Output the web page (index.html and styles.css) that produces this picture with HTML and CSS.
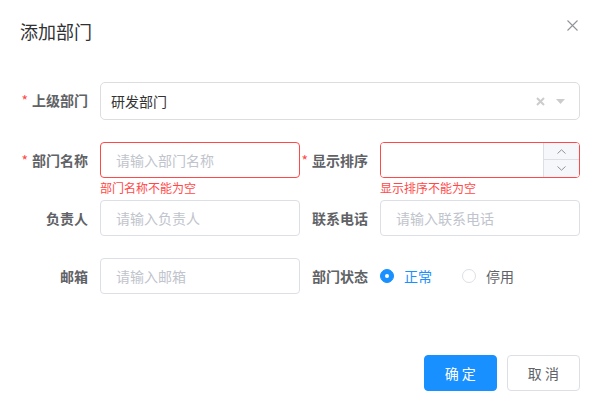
FILE: index.html
```html
<!DOCTYPE html>
<html lang="zh-CN">
<head>
<meta charset="utf-8">
<title>添加部门</title>
<link rel="stylesheet" href="styles.css">
</head>
<body>
<div class="dialog">
  <div class="dialog-header">
    <span class="dialog-title">添加部门</span>
    <button class="dialog-close" type="button" aria-label="Close">
      <svg width="11" height="11" viewBox="0 0 11 11"><path d="M0.5 0.5L10.5 10.5M10.5 0.5L0.5 10.5" stroke="#909399" stroke-width="1.1" fill="none"/></svg>
    </button>
  </div>

  <div class="dialog-body">
    <form class="form">
      <div class="form-row">
        <div class="form-item is-required col-24">
          <label class="form-label">上级部门</label>
          <div class="form-content">
            <div class="treeselect">
              <span class="treeselect-value">研发部门</span>
              <span class="treeselect-clear">
                <svg width="9" height="9" viewBox="0 0 9 9"><path d="M1 1L8 8M8 1L1 8" stroke="#cccccc" stroke-width="2" fill="none"/></svg>
              </span>
              <span class="treeselect-arrow">
                <svg width="9" height="5" viewBox="0 0 9 5"><path d="M0 0H9L4.5 5Z" fill="#cccccc"/></svg>
              </span>
            </div>
          </div>
        </div>
      </div>

      <div class="form-row">
        <div class="form-item is-required is-error col-12">
          <label class="form-label">部门名称</label>
          <div class="form-content">
            <input class="input" type="text" placeholder="请输入部门名称">
            <div class="form-error">部门名称不能为空</div>
          </div>
        </div>
        <div class="form-item is-required is-error col-12">
          <label class="form-label">显示排序</label>
          <div class="form-content">
            <div class="input-number">
              <input class="input input-number-field" type="text">
              <span class="input-number-btn increase">
                <svg width="9" height="5" viewBox="0 0 9 5"><path d="M0.5 4.5L4.5 0.8L8.5 4.5" stroke="#909399" stroke-width="1" fill="none"/></svg>
              </span>
              <span class="input-number-btn decrease">
                <svg width="9" height="5" viewBox="0 0 9 5"><path d="M0.5 0.5L4.5 4.2L8.5 0.5" stroke="#909399" stroke-width="1" fill="none"/></svg>
              </span>
            </div>
            <div class="form-error">显示排序不能为空</div>
          </div>
        </div>
      </div>

      <div class="form-row">
        <div class="form-item col-12">
          <label class="form-label">负责人</label>
          <div class="form-content">
            <input class="input" type="text" placeholder="请输入负责人">
          </div>
        </div>
        <div class="form-item col-12">
          <label class="form-label">联系电话</label>
          <div class="form-content">
            <input class="input" type="text" placeholder="请输入联系电话">
          </div>
        </div>
      </div>

      <div class="form-row">
        <div class="form-item col-12">
          <label class="form-label">邮箱</label>
          <div class="form-content">
            <input class="input" type="text" placeholder="请输入邮箱">
          </div>
        </div>
        <div class="form-item col-12">
          <label class="form-label">部门状态</label>
          <div class="form-content">
            <div class="radio-group">
              <label class="radio is-checked"><span class="radio-inner"></span><span class="radio-label">正常</span></label>
              <label class="radio"><span class="radio-inner"></span><span class="radio-label">停用</span></label>
            </div>
          </div>
        </div>
      </div>
    </form>
  </div>

  <div class="dialog-footer">
    <button class="btn btn-primary" type="button">确 定</button>
    <button class="btn" type="button">取 消</button>
  </div>
</div>
</body>
</html>
```

FILE: styles.css
```css
* {
  box-sizing: border-box;
}

html, body {
  margin: 0;
  background: #ffffff;
}

body {
  font-family: "Noto Sans CJK SC", "Noto Sans", "Liberation Sans", sans-serif;
  font-size: 14px;
  color: #606266;
}

.dialog {
  position: relative;
  width: 100%;
  background: #ffffff;
}

/* header */
.dialog-header {
  padding: 20px 17px 10px 20px;
}

.dialog-title {
  display: block;
  font-size: 18px;
  line-height: 22px;
  color: #303133;
}

.dialog-close {
  position: absolute;
  top: 20px;
  right: 19px;
  width: 11px;
  height: 11px;
  padding: 0;
  border: 0;
  background: none;
  line-height: 0;
  cursor: pointer;
}

/* body */
.dialog-body {
  padding: 30px 17px 30px 20px;
}

.form-row {
  display: flex;
}

.col-24 {
  flex: 0 0 100%;
}

.col-12 {
  flex: 0 0 50%;
  min-width: 0;
}

.form-item {
  display: flex;
  margin-bottom: 22px;
}

.form-label {
  flex: 0 0 80px;
  width: 80px;
  padding-right: 12px;
  text-align: right;
  font-weight: 700;
  font-size: 14px;
  line-height: 36px;
  color: #606266;
}

.is-required .form-label::before {
  content: "*";
  color: #ff4949;
  margin-right: 4px;
  font-weight: 400;
}

.form-content {
  position: relative;
  flex: 1;
  min-width: 0;
  line-height: 36px;
}

.form-error {
  position: absolute;
  top: 100%;
  left: 0;
  padding-top: 4px;
  font-size: 12px;
  line-height: 1;
  color: #ff4949;
}

/* text input */
.input {
  display: block;
  width: 100%;
  height: 36px;
  padding: 0 15px;
  border: 1px solid #dcdfe6;
  border-radius: 4px;
  background: #ffffff;
  font-family: inherit;
  font-size: 14px;
  color: #606266;
  outline: none;
}

.input::placeholder {
  color: #c0c4cc;
}

.is-error .input,
.is-error .input-number {
  border-color: #ff4949;
}

/* tree select */
.treeselect {
  display: flex;
  align-items: center;
  height: 38px;
  padding-left: 10px;
  border: 1px solid #dddddd;
  border-radius: 5px;
  background: #ffffff;
}

.treeselect-value {
  flex: 1;
  line-height: 36px;
  color: #333333;
}

.treeselect-clear {
  display: flex;
  width: 20px;
  justify-content: center;
  line-height: 0;
}

.treeselect-arrow {
  display: flex;
  width: 20px;
  margin-right: 9px;
  justify-content: center;
  line-height: 0;
}

/* number input */
.input-number {
  position: relative;
  height: 36px;
  border: 1px solid #dcdfe6;
  border-radius: 4px;
  overflow: hidden;
}

.input-number-field {
  height: 34px;
  border: 0;
  border-radius: 0;
  padding-right: 51px;
}

.input-number-btn {
  position: absolute;
  right: 0;
  width: 36px;
  height: 17px;
  display: flex;
  align-items: center;
  justify-content: center;
  background: #f5f7fa;
  border-left: 1px solid #dcdfe6;
  line-height: 0;
}

.input-number-btn.increase {
  top: 0;
  border-bottom: 1px solid #dcdfe6;
}

.input-number-btn.decrease {
  bottom: 0;
}

/* radio */
.radio-group {
  display: flex;
  align-items: center;
  height: 36px;
}

.radio {
  display: flex;
  align-items: center;
  margin-right: 30px;
  cursor: pointer;
}

.radio-inner {
  position: relative;
  width: 14px;
  height: 14px;
  border: 1px solid #dcdfe6;
  border-radius: 50%;
  background: #ffffff;
}

.radio.is-checked .radio-inner {
  border-color: #1890ff;
  background: #1890ff;
}

.radio.is-checked .radio-inner::after {
  content: "";
  position: absolute;
  left: 50%;
  top: 50%;
  width: 4px;
  height: 4px;
  margin: -2px 0 0 -2px;
  border-radius: 50%;
  background: #ffffff;
}

.radio-label {
  padding-left: 10px;
  font-size: 14px;
  line-height: 1;
  color: #606266;
}

.radio.is-checked .radio-label {
  color: #1890ff;
}

/* footer */
.dialog-footer {
  display: flex;
  justify-content: flex-end;
  gap: 10px;
  padding: 9px 17px 20px 20px;
}

.btn {
  height: 36px;
  padding: 0 20px;
  border: 1px solid #dcdfe6;
  border-radius: 4px;
  background: #ffffff;
  font-family: inherit;
  font-size: 14px;
  line-height: 34px;
  color: #606266;
  cursor: pointer;
}

.btn-primary {
  border-color: #1890ff;
  background: #1890ff;
  color: #ffffff;
}
```
